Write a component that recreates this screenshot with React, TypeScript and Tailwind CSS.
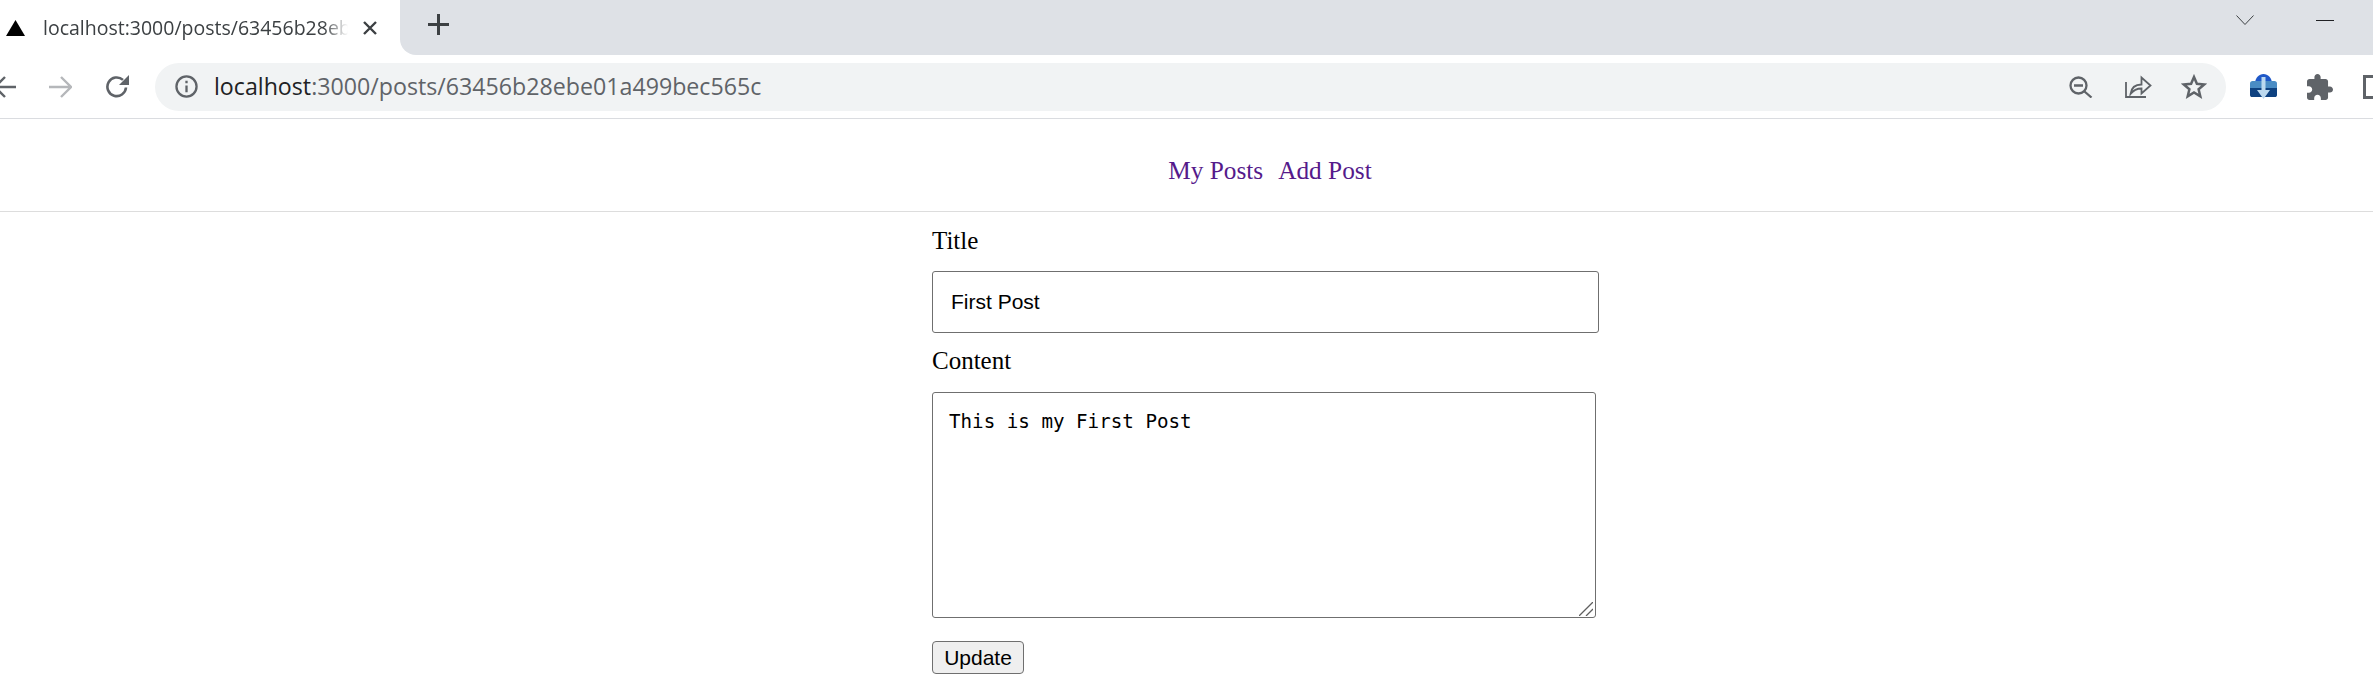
const serif = "font-['Liberation_Serif',serif]";

function Zoom() {
  return (
    <svg width="24" height="22" viewBox="0 0 24 22" fill="none" stroke="#5f6368" strokeWidth="2.3" className="shrink-0">
      <circle cx="9.500" cy="9.500" r="8" />
      <path d="M5 9.500h9M15.500 15.500l7 6" />
    </svg>
  );
}
function Share() {
  return (
    <svg width="27" height="23" viewBox="0 0 27 23" fill="none" stroke="#5f6368" strokeWidth="1.800" className="shrink-0">
      <path d="M1 7v15h20" />
      <path d="M5.500 19c.800-6 5-9.500 11-9.500V2.500l9 8-9 8v-5c-4.500 0-8 1.500-11 5.500z" />
    </svg>
  );
}
function Star() {
  return (
    <svg width="26" height="25" viewBox="0 0 26 25" fill="none" stroke="#5f6368" strokeWidth="2.500" className="shrink-0">
      <path d="M13 3l2.900 6.800 7.300.600-5.600 4.800 1.700 7.100L13 18.500l-6.300 3.800 1.700-7.100-5.600-4.800 7.300-.600z" />
    </svg>
  );
}
function Extension() {
  return (
    <svg width="27" height="25" viewBox="0 0 27 25" className="shrink-0">
      <path d="M5 9C5.500 3.500 9 0 13.500 0S21.500 3.500 22 9z" fill="#1f58c8" />
      <path d="M0 15V9.500C0 8 1 7 2.500 7h22C26 7 27 8 27 9.500V15z" fill="#4a8cc4" />
      <path d="M0 14h27v7c0 1.500-1 2-2 2H2c-1 0-2-.500-2-2z" fill="#0e4180" />
      <path d="M11.500 3h4v13H20l-6.500 9L7 16h4.500z" fill="#bcd9ef" />
    </svg>
  );
}
function Puzzle() {
  return (
    <svg width="26" height="26" viewBox="2 1 21 21" fill="#5f6368" className="shrink-0">
      <path d="M20.500 11H19V7c0-1.100-.900-2-2-2h-4V3.500C13 2.120 11.880 1 10.500 1S8 2.120 8 3.500V5H4c-1.100 0-1.990.900-1.990 2v3.800H3.500c1.490 0 2.700 1.210 2.700 2.700s-1.210 2.700-2.700 2.700H2V20c0 1.100.900 2 2 2h3.800v-1.500c0-1.490 1.210-2.700 2.700-2.700 1.490 0 2.700 1.210 2.700 2.700V22H17c1.100 0 2-.900 2-2v-4h1.500c1.380 0 2.500-1.120 2.500-2.500S21.880 11 20.500 11z" />
    </svg>
  );
}

export default function App() {
  return (
    <div className="h-[698px] w-full overflow-hidden bg-white">
      <div className="flex h-[55px] items-stretch">
        <div className="flex w-[400px] shrink-0 items-center pl-[6px]">
          <svg width="19" height="16" viewBox="0 0 19 16" className="shrink-0">
            <path d="M9.500 0L19 16H0z" fill="#000" />
          </svg>
          <span className="ml-[18px] w-[305px] shrink-0 overflow-hidden whitespace-nowrap font-['Open_Sans',sans-serif] text-[19.500px] text-[#3c4043] [mask-image:linear-gradient(to_right,black_92%,transparent)]">
            localhost:3000/posts/63456b28ebe01a499bec565c
          </span>
          <svg width="14" height="14" viewBox="0 0 14 14" stroke="#3c4043" strokeWidth="2.400" className="ml-[15px] shrink-0">
            <path d="M1 1l12 12M13 1L1 13" />
          </svg>
        </div>
        <div className="flex flex-1 items-start rounded-bl-[16px] bg-[#dee1e6] pl-[28px]">
          <svg width="21" height="21" viewBox="0 0 21 21" stroke="#3c4043" strokeWidth="3" className="mt-[14px] shrink-0">
            <path d="M10.500 0v21M0 10.500h21" />
          </svg>
          <svg width="18" height="10" viewBox="0 0 18 10" fill="none" stroke="#3c4043" strokeWidth="1" className="ml-auto mt-[15px] shrink-0">
            <path d="M.500 .500l8.500 9 8.500-9" />
          </svg>
          <div className="ml-[62px] mr-[39px] mt-[20px] h-px w-[18px] shrink-0 bg-[#202124]" />
        </div>
      </div>

      <div className="flex h-[64px] items-center border-b border-[#dadce0]">
        <svg width="17" height="22" viewBox="0 0 17 22" fill="none" stroke="#5f6368" strokeWidth="2.400" className="shrink-0">
          <path d="M0 11h16M5 1L-5 11 5 21" />
        </svg>
        <svg width="23" height="22" viewBox="0 0 23 22" fill="none" stroke="#b5b7ba" strokeWidth="2.400" className="ml-[32px] shrink-0">
          <path d="M0 11h21M12 1l10 10-10 10" />
        </svg>
        <svg width="24" height="23" viewBox="0 0 24 23" fill="none" stroke="#5f6368" strokeWidth="2.600" className="ml-[33px] shrink-0">
          <path d="M21 12.500a9.300 9.300 0 1 1-3-7.600" />
          <path d="M24 0v10h-10z" fill="#5f6368" stroke="none" />
        </svg>
        <div className="ml-[26px] flex h-[48px] w-[2071px] shrink-0 items-center rounded-full bg-[#f1f3f4] pl-[20px] pr-[19px]">
          <svg width="23" height="23" viewBox="0 0 24 24" fill="none" stroke="#5f6368" strokeWidth="2.400" className="shrink-0">
            <circle cx="12" cy="12" r="10.500" />
            <path d="M12 11v7M12 6v2.500" />
          </svg>
          <span className="ml-[16px] font-['Open_Sans',sans-serif] text-[23.200px] text-[#5f6368]">
            <span className="text-[#202124]">localhost</span>:3000/posts/63456b28ebe01a499bec565c
          </span>
          <div className="ml-auto flex items-center">
            <Zoom />
            <div className="ml-[32px]"><Share /></div>
            <div className="ml-[29px]"><Star /></div>
          </div>
        </div>
        <div className="ml-[24px] shrink-0"><Extension /></div>
        <div className="ml-[30px] shrink-0"><Puzzle /></div>
        <div className="ml-[30px] h-[24px] w-[30px] shrink-0 border-[3px] border-[#5f6368]" />
      </div>

      <nav className={`flex h-[93px] items-center justify-center gap-[15px] border-b border-[#dddddd] pl-[167px] pt-[12px] text-[25.300px] text-[#551a8b] ${serif}`}>
        <a>My Posts</a>
        <a>Add Post</a>
      </nav>

      <form className={`ml-[932px] flex w-[667px] flex-col items-start text-[25px] text-black ${serif}`}>
        <label className="mt-[14px] h-[29px] leading-[29px]">Title</label>
        <input
          readOnly
          value="First Post"
          className="mt-[16px] h-[62px] w-[667px] rounded-[3px] border border-[#6f6f6f] px-[18px] font-['Liberation_Sans',sans-serif] text-[21px] text-black"
        />
        <label className="mt-[13px] h-[29px] leading-[29px]">Content</label>
        <div className="relative mt-[17px] h-[226px] w-[664px]">
          <textarea
            readOnly
            value="This is my First Post"
            className="block h-full w-full resize-none rounded-[3px] border border-[#6f6f6f] px-[16px] py-[17px] font-['DejaVu_Sans_Mono',monospace] text-[19.200px] leading-[24px] text-black"
          />
          <svg width="14" height="14" viewBox="0 0 14 14" fill="none" stroke="#5f5f5f" strokeWidth="1.300" className="absolute bottom-[2px] right-[3px]">
            <path d="M0 14L14 0M7 14l7-7" />
          </svg>
        </div>
        <button
          type="button"
          className="mt-[23px] h-[33px] w-[92px] rounded-[4px] border border-[#6f6f6f] bg-[#efefef] font-['Liberation_Sans',sans-serif] text-[21px] leading-none text-black"
        >
          Update
        </button>
      </form>
    </div>
  );
}
